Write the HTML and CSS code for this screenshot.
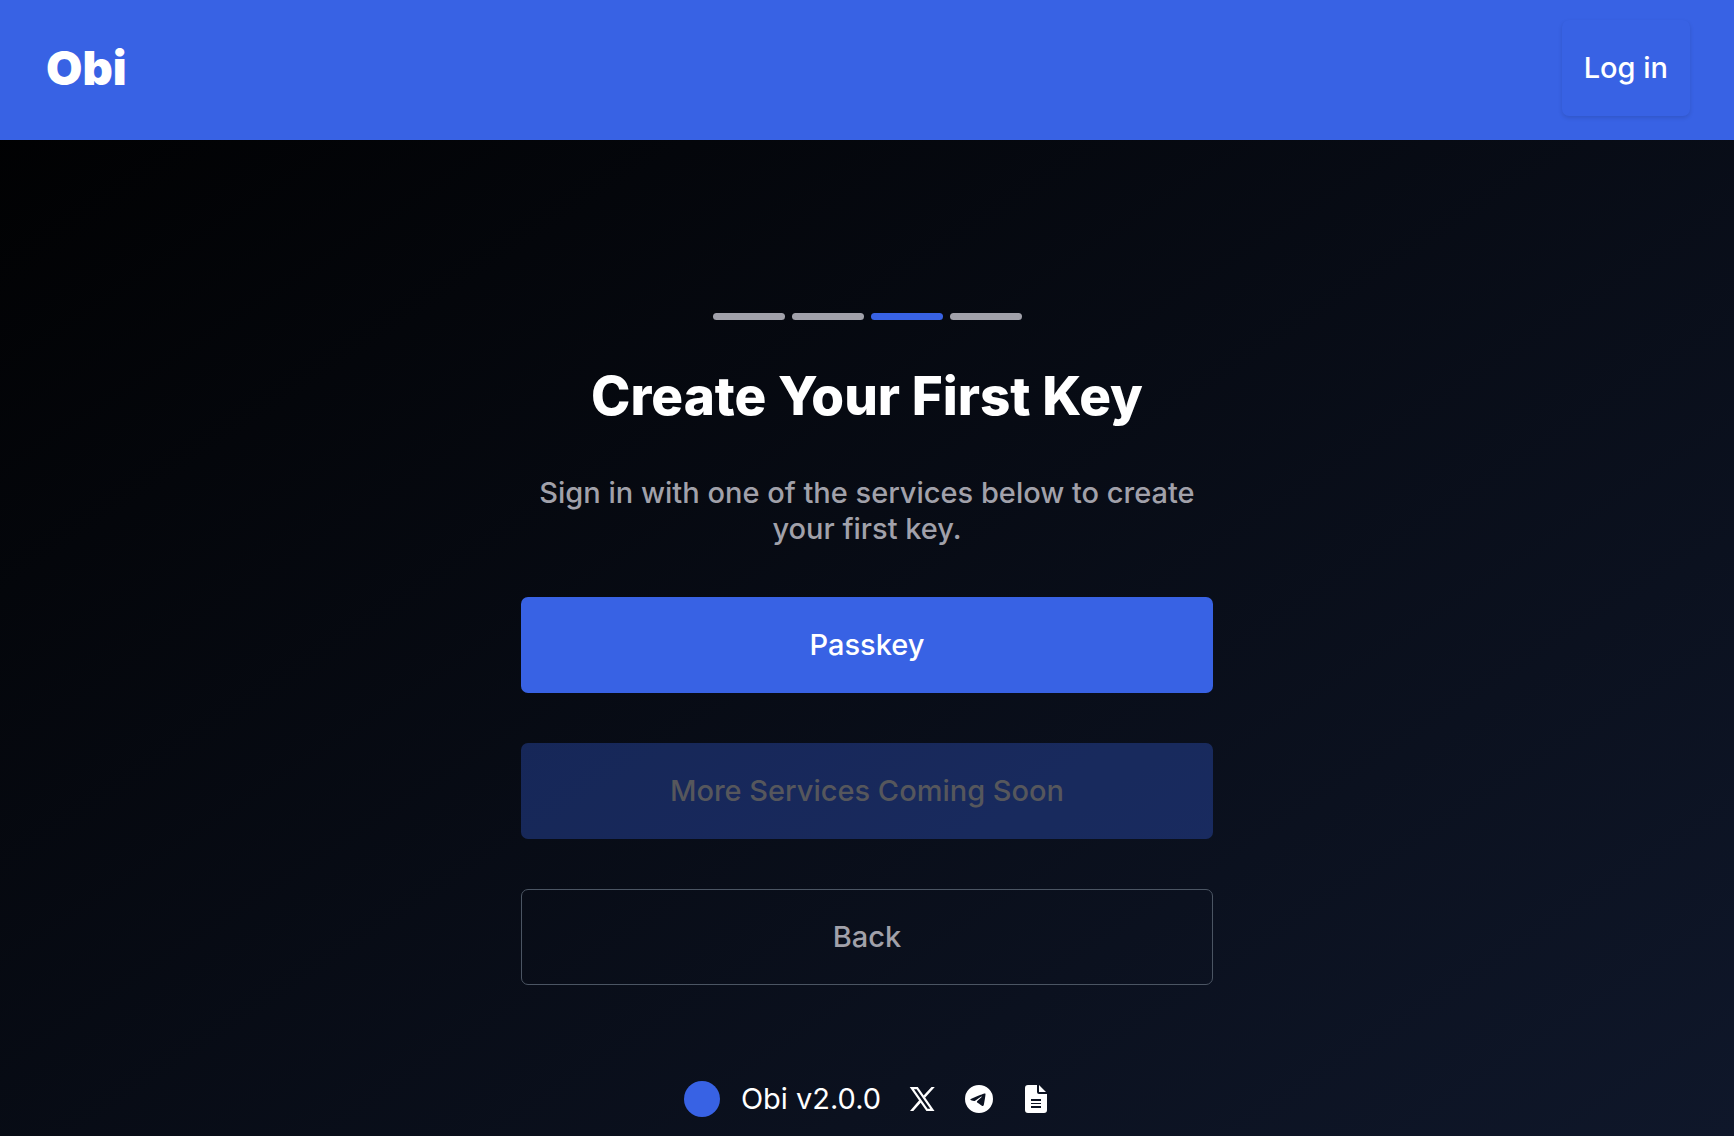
FILE: index.html
```html
<!DOCTYPE html>
<html lang="en">
<head>
  <meta charset="utf-8">
  <meta name="viewport" content="width=device-width, initial-scale=1">
  <title>Obi – Create Your First Key</title>
  <link rel="stylesheet" href="styles.css">
</head>
<body>
  <header class="header">
    <a class="logo" href="#">Obi</a>
    <button class="login" type="button">Log in</button>
  </header>

  <main class="main">
    <section class="panel">
      <div class="steps" role="img" aria-label="Step 3 of 4">
        <span class="step"></span>
        <span class="step"></span>
        <span class="step step-active"></span>
        <span class="step"></span>
      </div>
      <h1 class="title">Create Your First Key</h1>
      <p class="lead">Sign in with one of the services below to create your first key.</p>
      <button class="btn btn-primary" type="button">Passkey</button>
      <button class="btn btn-soon" type="button" disabled>More Services Coming Soon</button>
      <button class="btn btn-outline" type="button">Back</button>
    </section>
  </main>

  <footer class="footer">
    <span class="dot"></span>
    <span class="version">Obi v2.0.0</span>
    <nav class="social">
      <a class="social-link" href="#" aria-label="X">
        <svg class="icon" viewBox="0 0 28 28" fill="none" stroke="currentColor"><path fill="currentColor" stroke="none" d="M23.500 2h3.300L17 12.800l-1.600-2.100ZM2 26l9.400-11 1.700 2.200L5.300 26Z"/><path stroke-width="2.200" d="M3.800 3.100h5.400l15.200 21.800H19Z"/></svg>
      </a>
      <a class="social-link" href="#" aria-label="Telegram">
        <svg class="icon" viewBox="0 0 24 24" fill="currentColor"><path d="M12 0a12 12 0 1 0 0 24 12 12 0 0 0 0-24Zm5.56 8.16c-.18 1.9-.96 6.5-1.36 8.63-.17.9-.5 1.2-.82 1.23-.7.06-1.23-.46-1.9-.9-1.06-.7-1.65-1.13-2.68-1.8-1.19-.79-.42-1.22.26-1.93.18-.18 3.24-2.97 3.3-3.23.01-.03.01-.15-.06-.21s-.17-.04-.25-.02c-.1.02-1.8 1.14-5.06 3.34-.48.33-.91.49-1.3.48-.43-.01-1.25-.24-1.87-.44-.75-.24-1.35-.37-1.3-.79.03-.22.33-.44.9-.66 3.5-1.53 5.83-2.53 7-3.02 3.33-1.38 4.02-1.62 4.48-1.63.1 0 .32.02.47.14.12.1.15.23.17.33.01.09.03.31.02.48Z"/></svg>
      </a>
      <a class="social-link" href="#" aria-label="Documentation">
        <svg class="icon" viewBox="0 0 28 28" fill="currentColor"><path d="M6 0h9v7a2 2 0 0 0 2 2h8v16a3 3 0 0 1-3 3H6a3 3 0 0 1-3-3V3a3 3 0 0 1 3-3Zm3 14v2h10v-2Zm0 4v1h10v-1Zm0 3v2h10v-2ZM17 0l7 7h-7Z"/></svg>
      </a>
    </nav>
  </footer>
</body>
</html>
```
FILE: styles.css
```css
:root {
  --blue: #3862e4;
  --gray: #a1a1aa;
}

* {
  box-sizing: border-box;
}

body {
  margin: 0;
  min-height: 100vh;
  display: flex;
  flex-direction: column;
  background: linear-gradient(to bottom right, #000000, #0f172a);
  color: #ffffff;
  font-family: Inter, "Liberation Sans", sans-serif;
  font-size: 29px;
  line-height: 36px;
}

button {
  font: inherit;
  font-weight: 500;
}

.header {
  display: flex;
  align-items: center;
  justify-content: space-between;
  padding: 20px 44px 24px 46px;
  background: var(--blue);
}

.logo {
  color: #ffffff;
  font-size: 47px;
  font-weight: 900;
  text-decoration: none;
}

.login {
  padding: 30px 22px;
  border: 0;
  border-radius: 7px;
  background: var(--blue);
  color: #ffffff;
  box-shadow: 0 2px 4px rgba(0, 0, 0, 0.12);
}

.main {
  flex: 1;
  padding: 173px 24px 96px;
}

.panel {
  display: flex;
  flex-direction: column;
  gap: 50px;
  max-width: 692px;
  margin: 0 auto;
}

.steps {
  display: flex;
  justify-content: center;
  gap: 7px;
}

.step {
  width: 72px;
  height: 7px;
  border-radius: 4px;
  background: var(--gray);
}

.step-active {
  background: var(--blue);
}

.title {
  margin: 0;
  padding-bottom: 3px;
  font-size: 53px;
  font-weight: 800;
  line-height: 52px;
  text-align: center;
}

.lead {
  margin: 0;
  color: var(--gray);
  font-weight: 500;
  text-align: center;
}

.btn {
  height: 96px;
  border: 0;
  border-radius: 7px;
  text-align: center;
}

.btn-primary {
  background: var(--blue);
  color: #ffffff;
}

.btn-soon {
  background: rgba(56, 98, 228, 0.33);
  color: #56575c;
}

.btn-outline {
  border: 1px solid #4b5563;
  background: transparent;
  color: var(--gray);
}

.footer {
  display: flex;
  align-items: center;
  justify-content: center;
  gap: 21px;
  padding-bottom: 19px;
}

.dot {
  width: 36px;
  height: 36px;
  border-radius: 50%;
  background: var(--blue);
}

.social {
  display: flex;
  gap: 29px;
  padding-left: 6px;
}

.social-link {
  display: flex;
  color: #ffffff;
}

.icon {
  width: 28px;
  height: 28px;
}
```
